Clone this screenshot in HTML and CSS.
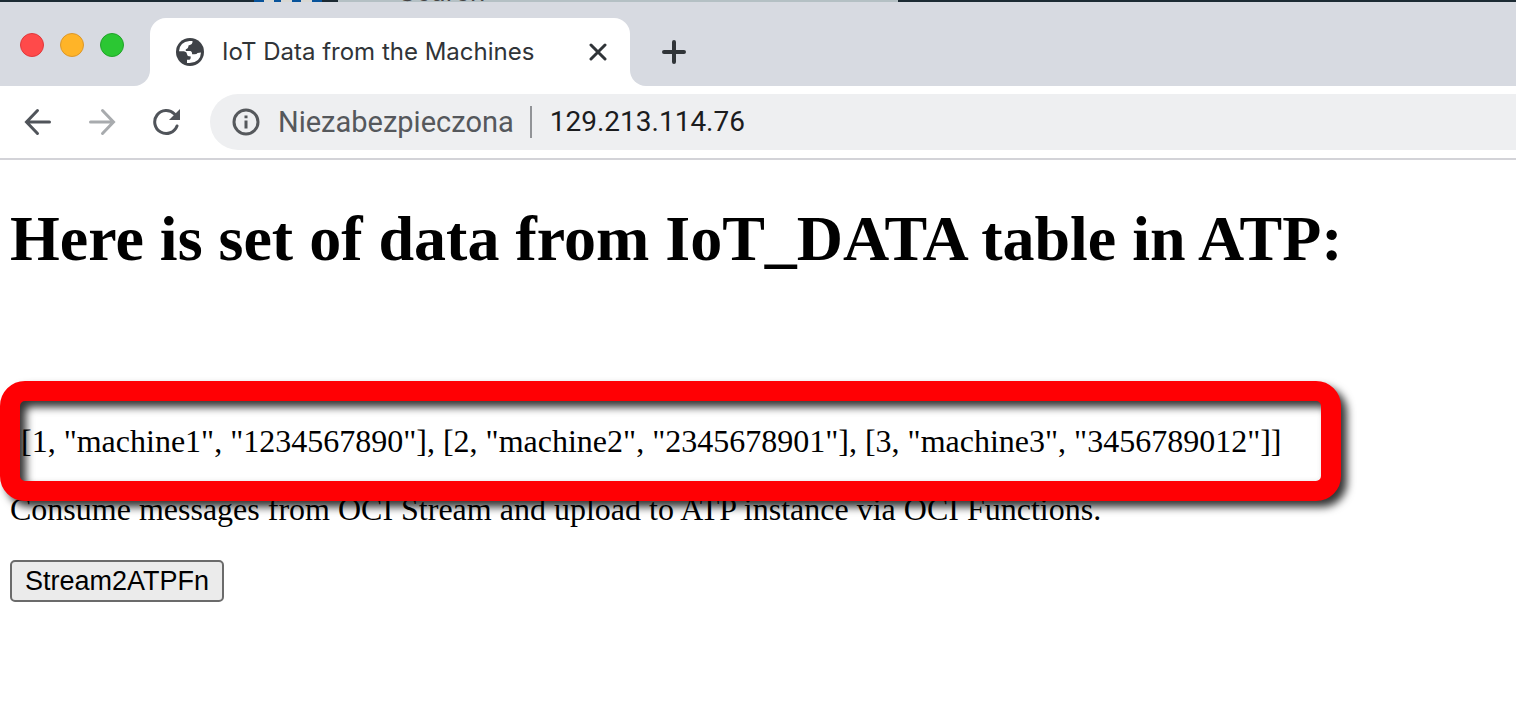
FILE: index.html
```html
<!DOCTYPE html>
<html lang="en">
<head>
<meta charset="utf-8">
<title>IoT Data from the Machines</title>
<link rel="stylesheet" href="styles.css">
</head>
<body>
<div class="backdrop"><span class="backdrop-tiles"></span><span class="backdrop-field">Search</span></div>
<header class="browser">
  <div class="tabs">
    <div class="window-controls">
      <button class="dot dot-close" aria-label="Close window"></button>
      <button class="dot dot-minimize" aria-label="Minimize window"></button>
      <button class="dot dot-zoom" aria-label="Zoom window"></button>
    </div>
    <div class="tab">
      <svg class="globe" viewBox="0 0 28 28" aria-hidden="true">
        <circle cx="14" cy="14" r="14" fill="#3f4247"/>
        <path d="M3 13.300Q3.500 4 13.500 3H16.500Q17 6.500 12.500 7.500Q12.500 10.500 9.800 11.200V13H14.500Q16.200 13.500 16.200 16.200H18.500Q21 16.200 21.500 15L25 14.500Q24.500 24.500 13.500 25H11V21.800H13.500Q14.800 21 14.800 18.500Q11 18.500 11 16Q11 14 8 13.300Z" fill="#fff"/>
      </svg>
      <span class="tab-title">IoT Data from the Machines</span>
      <button class="icon-button tab-close" aria-label="Close tab">
        <svg width="18" height="18" viewBox="0 0 18 18"><path d="M2 2L16 16M16 2L2 16"/></svg>
      </button>
    </div>
    <div class="tab-space">
      <button class="icon-button" aria-label="New tab">
        <svg width="24" height="24" viewBox="0 0 24 24"><path class="plus" d="M12 2V22M2 12H22"/></svg>
      </button>
    </div>
  </div>
  <nav class="toolbar">
    <button class="icon-button" aria-label="Back">
      <svg width="28" height="28" viewBox="0 0 28 28"><path d="M25.500 14H3M13.500 2.500L2.500 14L13.500 25.500"/></svg>
    </button>
    <button class="icon-button forward" aria-label="Forward">
      <svg width="28" height="28" viewBox="0 0 28 28"><path d="M2.500 14H25M14.500 2.500L25.500 14L14.500 25.500"/></svg>
    </button>
    <button class="icon-button" aria-label="Reload">
      <svg width="28" height="28" viewBox="0 0 28 28"><path d="M22.500 6A11.500 11.500 0 1 0 25 18"/><path class="solid" d="M28 1V12H17Z"/></svg>
    </button>
    <div class="address">
      <svg class="info" width="28" height="28" viewBox="0 0 28 28" aria-hidden="true"><circle cx="14" cy="14" r="12"/><path d="M14 12.500V20.500M14 7.500V10.200"/></svg>
      <label class="security" for="url">Niezabezpieczona</label>
      <input class="url" id="url" type="text" value="129.213.114.76">
    </div>
  </nav>
</header>
<main class="page">
  <h1>Here is set of data from IoT_DATA table in ATP:</h1>
  <div class="record"><p>[1, "machine1", "1234567890"], [2, "machine2", "2345678901"], [3, "machine3", "3456789012"]]</p></div>
  <p>Consume messages from OCI Stream and upload to ATP instance via OCI Functions.</p>
  <button class="action">Stream2ATPFn</button>
</main>
</body>
</html>
```

FILE: styles.css
```css
* { box-sizing: border-box; }
body { margin: 0; background: #fff; color: #000; overflow-x: hidden; }
button { padding: 0; border: 0; background: none; }
svg { display: block; }

.backdrop {
  display: flex;
  align-items: flex-end;
  height: 2px;
  overflow: hidden;
  background: #1c2a33;
  padding-left: 254px;
}
.backdrop-tiles {
  width: 84px;
  height: 2px;
  background: linear-gradient(90deg, #07529a 10px, #d8d8d4 10px 20px, #07529a 20px 27px, #d8d8d4 27px 38px, #07529a 38px 47px, #d8d8d4 47px 58px, #07529a 58px 68px, #1c2a33 68px);
}
.backdrop-field {
  width: 560px;
  padding-left: 61px;
  background: #b4c0c4;
  color: #454545;
  font: 26px/20px Inter, sans-serif;
}

.tabs {
  display: flex;
  height: 84px;
  background: linear-gradient(#d7dae1 48px, #fff 48px);
}
.window-controls {
  display: flex;
  gap: 16px;
  width: 150px;
  padding: 31px 0 0 20px;
  background: #d7dae1;
  border-bottom-right-radius: 16px;
}
.dot { width: 24px; height: 24px; border-radius: 50%; border: 1px solid; }
.dot-close { background: #ff4a4a; border-color: #e0383c; }
.dot-minimize { background: #ffb428; border-color: #dc972a; }
.dot-zoom { background: #2bc733; border-color: #21a32a; }
.tab {
  display: flex;
  align-items: center;
  width: 480px;
  height: 68px;
  margin-top: 16px;
  padding: 0 23px 0 26px;
  background: #fff;
  border-radius: 16px 16px 0 0;
}
.globe { width: 28px; height: 28px; margin-right: 18px; }
.tab-title { flex: 1; font: 24px/32px Inter, sans-serif; color: #303438; white-space: nowrap; }
.tab-space {
  flex: 1;
  padding: 38px 0 0 32px;
  background: #d7dae1;
  border-bottom-left-radius: 16px;
}
.icon-button svg { fill: none; stroke: #50545a; stroke-width: 3; stroke-linecap: round; }
.icon-button .solid { fill: #50545a; stroke: none; }
.icon-button .plus { stroke: #303438; stroke-width: 4; }
.tab-close svg { stroke: #303438; }
.forward svg { stroke: #a8abae; }

.toolbar {
  display: flex;
  align-items: center;
  gap: 36px;
  height: 74px;
  padding-left: 24px;
  border-bottom: 2px solid #d3d3d8;
}
.address {
  display: flex;
  align-items: center;
  flex: 1;
  height: 56px;
  margin-left: -6px;
  padding-left: 22px;
  background: #eeeff1;
  border-radius: 28px 0 0 28px;
}
.info { fill: none; stroke: #55585c; stroke-width: 3; }
.security, .url { font: 28px/32px Roboto, sans-serif; }
.security { margin-left: 18px; padding-right: 16px; border-right: 2px solid #919397; color: #55585c; font-size: 29px; }
.url { flex: 1; min-width: 0; padding: 0 0 0 18px; border: 0; outline: 0; background: none; color: #1b1c1e; }

.page {
  padding: 42px 10px 32px;
  font: 32px/37px "Liberation Serif", "Times New Roman", serif;
}
h1 { margin: 0 0 147px; font-size: 64px; line-height: 74px; white-space: nowrap; }
p { margin: 0 0 32px; white-space: nowrap; }
.record { position: relative; width: fit-content; margin-bottom: 31px; padding-left: 11px; }
.record p { margin: 0; }
.record::after {
  content: "";
  position: absolute;
  inset: -42px -59px -41px -10px;
  border: 20px solid #ff0004;
  border-radius: 25px;
  filter: drop-shadow(6px 6px 4px rgba(0, 0, 0, 0.8));
  pointer-events: none;
}
.action {
  display: block;
  height: 42px;
  padding: 0 13px;
  border: 2px solid #6b6b6b;
  border-radius: 5px;
  background: #ebebeb;
  color: #000;
  font: 27px/36px "Liberation Sans", Arial, sans-serif;
}
```
